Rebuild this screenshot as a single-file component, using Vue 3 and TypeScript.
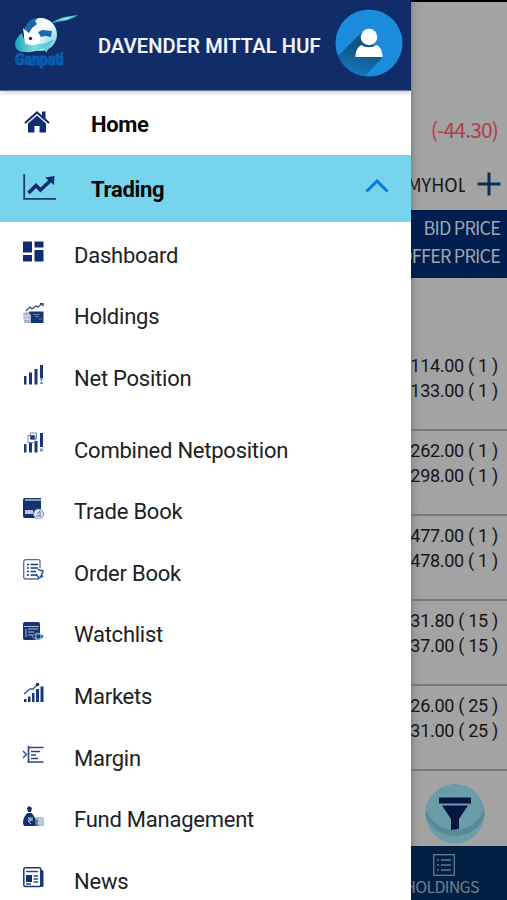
<script setup lang="ts">
interface Entry {
  label: string
  icon: string
  tall?: boolean
}
interface Quote {
  bid: string
  offer: string
}

const entries: Entry[] = [
  { label: 'Dashboard', icon: 'dashboard' },
  { label: 'Holdings', icon: 'holdings' },
  { label: 'Net Position', icon: 'net' },
  { label: 'Combined Netposition', icon: 'combined', tall: true },
  { label: 'Trade Book', icon: 'trade' },
  { label: 'Order Book', icon: 'order' },
  { label: 'Watchlist', icon: 'watch' },
  { label: 'Markets', icon: 'markets' },
  { label: 'Margin', icon: 'margin' },
  { label: 'Fund Management', icon: 'fund' },
  { label: 'News', icon: 'news' },
]

const quotes: Quote[] = [
  { bid: '114.00 ( 1 )', offer: '133.00 ( 1 )' },
  { bid: '262.00 ( 1 )', offer: '298.00 ( 1 )' },
  { bid: '477.00 ( 1 )', offer: '478.00 ( 1 )' },
  { bid: '31.80 ( 15 )', offer: '37.00 ( 15 )' },
  { bid: '26.00 ( 25 )', offer: '31.00 ( 25 )' },
]
</script>

<template>
  <div class="screen">
    <nav class="drawer">
      <header class="profile">
        <div class="brand">
          <svg class="globe" viewBox="0 0 64 40" width="64" height="40">
            <defs>
              <linearGradient id="swoosh" x1="0" y1="1" x2="1" y2="0">
                <stop offset="0" stop-color="#168da9" />
                <stop offset=".55" stop-color="#8ce5e8" />
                <stop offset="1" stop-color="#23a7c5" />
              </linearGradient>
              <linearGradient id="orbit" x1="0" y1="0" x2="1" y2="0">
                <stop offset="0" stop-color="#1ba3b8" />
                <stop offset=".5" stop-color="#7fdfe6" />
                <stop offset="1" stop-color="#2fb9d0" />
              </linearGradient>
              <linearGradient id="sea" x1="0" y1="0" x2="1" y2="1">
                <stop offset=".5" stop-color="#f4fbff" />
                <stop offset="1" stop-color="#4dc5d8" />
              </linearGradient>
            </defs>
            <circle cx="26.500" cy="19.500" r="16.500" fill="url(#sea)" />
            <path d="M11 15C12 7 17 3 24 3l-3 3 2 3-5 4-3 5z" fill="#1765ac" />
            <path d="M24 17l4-2 10 1-1 6-6-1-4 1z" fill="#196ba9" />
            <path d="M37 8C45 3 53 1 64 0c-7 5-16 6-25 8z" fill="url(#swoosh)" />
            <path d="M8 18C-1 25-2 36 10 37c12 1 24-4 30-13-7 5-15 6-22 5-6-1-9-5-10-11z" fill="url(#orbit)" />
            <path d="M9 13l6 6 3-1c6 1 9 5 8 9-4 4-10 4-15 1z" fill="#fff" />
            <circle cx="16.500" cy="23.500" r="1.800" fill="#12336d" />
            <path d="M30 32l7-3-5 9z" fill="#64d4df" />
          </svg>
          <span class="brand-name">Ganpati</span>
        </div>
        <span class="user">DAVENDER MITTAL HUF</span>
        <svg class="avatar" viewBox="0 0 68 68" width="68" height="68">
          <defs>
            <linearGradient id="shade" x1=".5" y1=".3" x2=".3" y2="1">
              <stop offset="0" stop-color="#115485" />
              <stop offset="1" stop-color="#178ade" />
            </linearGradient>
            <clipPath id="disc"><circle cx="34" cy="34" r="33.500" /></clipPath>
          </defs>
          <circle cx="34" cy="34" r="33.500" fill="#1c8cdd" />
          <path clip-path="url(#disc)" d="M28 22L-4 54l24 24 27-29z" fill="url(#shade)" />
          <circle cx="34" cy="28" r="8.300" fill="#fff" />
          <path d="M20.500 48c0-6 2-10 6-12 4 3 11 3 15 0 4 2 6 6 6 12z" fill="#fff" />
        </svg>
      </header>

      <div class="main-item">
        <svg class="home-icon" viewBox="0 0 26 22" width="26" height="22">
          <path d="M1 12L13 1.500 25 12" fill="none" stroke="#102d70" stroke-width="2.200" />
          <path d="M18 .5h3.500V9L18 6z M13 4.500L22 12.500V21.500h-6.500V15h-5v6.500H4v-9z" fill="#102d70" />
        </svg>
        <span>Home</span>
      </div>
      <div class="main-item active">
        <svg class="trend-icon" viewBox="0 0 34 26" width="34" height="26">
          <path d="M1.200 0v24.800H33" fill="none" stroke="#173a7a" stroke-width="1.800" />
          <path d="M5.500 19L13 11.500l4.500 4.500L28 6" fill="none" stroke="#102d70" stroke-width="3.600" />
          <path d="M22 3.500L31.500 2 31 11z" fill="#102d70" />
        </svg>
        <span>Trading</span>
        <svg class="chevron" viewBox="0 0 24 14" width="24" height="14">
          <path d="M1.500 12.500L12 2l10.500 10.500" fill="none" stroke="#087cda" stroke-width="3" />
        </svg>
      </div>

      <div class="sub-list">
        <div v-for="entry in entries" :key="entry.icon" class="sub-item" :class="{ tall: entry.tall }">
          <svg class="icon" viewBox="0 0 21 21" width="21" height="21">
            <path v-if="entry.icon === 'dashboard'" d="M0 .5h9v11H0z M11.500.5H20.500v6h-9z M0 14h9v6.500H0z M11.500 9h9v11.500h-9z" fill="#102d70" />
            <g v-else-if="entry.icon === 'holdings'">
              <path d="M3 8l4-4 2 2 4-3 2 1 5-4M17 .5h3v3" fill="none" stroke="#264481" stroke-width="1.200" />
              <path d="M6 8.500h14.500V20H6z" fill="#163574" />
              <path d="M10 11.500h7M12 13.500h4M16 16h3" stroke="#8195bb" stroke-width=".8" />
              <path d="M0 10l5-1 3 3v8H1z" fill="#a9b7ce" />
              <path d="M0 13h7M0 16h7" stroke="#e8edf4" />
            </g>
            <g v-else-if="entry.icon === 'net'" fill="#183879">
              <path d="M1 12h2.500v8.500H1z M6 8.500h3v12H6z M11.500 5h3v15.500h-3z M17 1h3v13.500h-3z M17 15.500h3l-1.500 1.500z" />
              <circle cx="18.500" cy="19" r="1.300" fill="#6b80ac" />
            </g>
            <g v-else-if="entry.icon === 'combined'" fill="#183879">
              <path d="M1 12h2.500v8.500H1z M6 11h3v9.500H6z M11.500 9h3v11.500h-3z M17 1h3v14h-3z" />
              <path d="M5 3.500h7v7H5z M7.500 1h6v6h-6z" fill="#fff" stroke="#7185af" />
              <path d="M7.500 3.500h4v4h-4z" />
              <circle cx="18.500" cy="18" r="1.800" fill="#8294b8" />
            </g>
            <g v-else-if="entry.icon === 'trade'">
              <path d="M0 2Q0 0 2 0h16v1.500H2v1h16V20H2q-2 0-2-2z" fill="#13306f" />
              <path d="M2 12h8v4H2z" fill="#bac5da" />
              <circle cx="15.500" cy="16" r="5" fill="#e5ebf4" stroke="#7189b5" />
              <path d="M13 18h5M14 16l3-3v5" fill="none" stroke="#536f9f" />
            </g>
            <g v-else-if="entry.icon === 'order'" fill="none" stroke="#5571a2">
              <path d="M17 9V2.500Q17 .7 15.500.7H3Q.7.7.7 3v15q0 2 2.300 2h13" stroke-width="1.300" />
              <path d="M4 5.500h2M4 9h2M4 12.500h2M4 16h2M7.500 5.500H15M7.500 9H15M7.500 12.500H13M7.500 16H14" stroke="#1b3a7a" stroke-width="1.600" />
              <path d="M15 10.500l5 1.500-1 3-2 4M13 15l3 4 4-2" stroke="#2c5795" stroke-width="1.600" />
            </g>
            <g v-else-if="entry.icon === 'watch'">
              <path d="M0 3q0-2 2-2h13q2 0 2 2v16H2q-2 0-2-2z" fill="#153371" />
              <path d="M1 5.500h15M3 8v8M5 8h10M5 11h6M5 14h5" stroke="#aebbd2" />
              <path d="M9 15.500q5-7 12 0-6 7-12 0z" fill="#173a74" stroke="#fff" stroke-width=".5" />
              <circle cx="15.300" cy="15.500" r="2.700" fill="none" stroke="#8dc4d4" stroke-width="1.100" />
            </g>
            <g v-else-if="entry.icon === 'markets'" fill="#173879">
              <path d="M1 17h2.500v3H1z M5 14.500h2.500V20H5z M9 11h2.500v9H9z M13 7h3v13h-3z M17.500 4.500h3V20h-3z" />
              <path d="M1 12l6-5 3 0 5-5" fill="none" stroke="#345187" stroke-width="1.300" />
              <circle cx="14.500" cy="2.500" r="1.800" />
            </g>
            <g v-else-if="entry.icon === 'margin'" fill="none" stroke="#2b4981">
              <path d="M5.500 2v17M6 3.500h14.500M8 7.500h9M8 11h5M8 14.500h7M6 18h14.500" stroke-width="1.700" />
              <path d="M0 7l3.500 3.500L0 14" stroke-width="1.400" />
            </g>
            <g v-else-if="entry.icon === 'fund'">
              <path d="M4 2l2-2 3 2-1 4H5z M4.500 7h4c4 4 5 8 4 13H1C-1 17 0 11 4.500 7z" fill="#142f70" />
              <path d="M5 12h5M5 14h5M6 12q5 3-1 3l3 3" fill="none" stroke="#c6d0e1" />
              <path d="M12 11h7q2 0 2 2v7h-9z" fill="#b4bfd3" />
              <path d="M12 13h3v7h-3z" fill="#536b9b" />
              <path d="M13 14h7M13 17h7" stroke="#e0e5ee" stroke-width=".6" />
            </g>
            <g v-else>
              <path d="M17 3h2q1.500 0 1.500 2v13.500q0 1.500-2 1.500H16z" fill="#19356f" />
              <rect x=".8" y=".8" width="17" height="18.800" rx="1.500" fill="#fff" stroke="#183775" stroke-width="1.500" />
              <path d="M3 8h6v7H3z" fill="#102d70" />
              <path d="M3 4.500h12M10.500 9H15M10.500 12H15M10.500 15H15M3 17h5" stroke="#29477f" stroke-width="1.300" />
            </g>
          </svg>
          <span class="sub-label">{{ entry.label }}</span>
        </div>
      </div>
    </nav>

    <main class="page">
      <div class="status"></div>
      <div class="change">(-44.30)</div>
      <div class="tabs">
        <div class="tab"><span>MYHOL</span></div>
        <svg viewBox="0 0 24 24" width="24" height="24"><path d="M12 .5v23M.500 12h23" stroke="#063157" stroke-width="3" /></svg>
      </div>
      <div class="columns"><span>BID PRICE</span><span>OFFER PRICE</span></div>
      <div class="quotes">
        <div v-for="quote in quotes" :key="quote.bid" class="quote">
          <span>{{ quote.bid }}</span><span>{{ quote.offer }}</span>
        </div>
      </div>
      <div class="filter">
        <svg viewBox="0 0 60 60" width="60" height="60">
          <defs><clipPath id="round"><circle cx="30" cy="30" r="29.500" /></clipPath></defs>
          <circle cx="30" cy="30" r="29.500" fill="#6b9ca9" />
          <g clip-path="url(#round)">
            <circle cx="30" cy="20" r="32" fill="#5b8894" />
            <circle cx="30" cy="15" r="31" fill="#6b9ca9" />
          </g>
          <path d="M14 13.500h32v6H14z M17 21.500h26L34 35v10L26 46V35z" fill="#071641" />
        </svg>
      </div>
      <footer class="bottom">
        <svg viewBox="0 0 22 22" width="22" height="22" fill="none" stroke="#65798d">
          <rect x=".7" y=".7" width="20.600" height="20.600" stroke-width="1.300" />
          <path d="M4 6h2M4 11h2M4 16h2M8 6h10M8 11h10M8 16h10" stroke-width="1.300" />
        </svg>
        <span>HOLDINGS</span>
      </footer>
    </main>
  </div>
</template>

<style>
body {
  margin: 0;
  overflow: hidden;
}
</style>

<style scoped>
.screen {
  display: grid;
  grid-template-columns: 411px 96px;
  width: 507px;
  height: 900px;
  overflow: hidden;
  font-family: Roboto, sans-serif;
}
.drawer {
  background: #fff;
  height: 900px;
  overflow: hidden;
}
.profile {
  box-sizing: border-box;
  height: 91px;
  display: flex;
  align-items: flex-start;
  background: #102c69;
  border-bottom: 1px solid #66719e;
  box-shadow: 0 1px 5px #8888;
}
.brand {
  width: 64px;
  margin: 15px 0 0 14px;
}
.globe {
  display: block;
}
.brand-name {
  display: block;
  margin: -3px 0 0 1px;
  width: 49px;
  color: #075cae;
  font: 900 14.5px/16px Roboto, sans-serif;
  letter-spacing: -0.3px;
  -webkit-text-stroke: 0.7px #075cae;
  transform: scaleY(1.15);
}
.user {
  width: 238px;
  margin: 34px 0 0 20px;
  color: #f4f7ff;
  font-size: 20px;
  line-height: 24px;
  font-weight: 500;
  letter-spacing: 0.17px;
  white-space: nowrap;
  -webkit-text-stroke: 0.2px #f4f7ff;
}
.avatar {
  margin-top: 9px;
  margin-left: -1px;
}
.main-item {
  height: 64px;
  display: grid;
  grid-template-columns: 91px 1fr 70px;
  align-items: center;
  font-size: 22px;
  line-height: 26px;
  font-weight: 700;
  letter-spacing: -0.3px;
  color: #050708;
}
.main-item span {
  padding-top: 3px;
}
.home-icon {
  margin: 0 0 2px 24px;
}
.active {
  height: 67px;
  background: #76d4ed;
}
.active span {
  padding-top: 2px;
}
.trend-icon {
  margin: 0 0 4px 23px;
}
.chevron {
  margin: 0 0 6px 24px;
}
.sub-list {
  padding-top: 3px;
}
.sub-item {
  height: 61.6px;
  display: grid;
  grid-template-columns: 21px 1fr;
  column-gap: 30px;
  align-items: center;
  padding-left: 23px;
  color: #202124;
}
.sub-label {
  font-size: 22px;
  line-height: 26px;
  letter-spacing: -0.24px;
  white-space: nowrap;
}
.icon {
  margin-bottom: 8px;
}
.tall {
  padding-top: 10px;
}
.tall .icon {
  margin-bottom: 17px;
}
.page {
  display: flex;
  flex-direction: column;
  overflow: hidden;
  height: 900px;
  background: linear-gradient(90deg, #858585, #989898 3px, #a2a2a2 9px, #a3a3a3 13px);
  color: #151515;
}
.status {
  height: 2px;
  background: #000;
}
.change {
  height: 36px;
  margin: 109px 9px 1px 0;
  color: #b23d4a;
  text-align: right;
  font: 21px/36px "Noto Sans CJK SC", sans-serif;
  letter-spacing: -0.85px;
}
.tabs {
  height: 62px;
  display: flex;
  align-items: center;
  justify-content: space-between;
  padding-right: 6px;
  padding-top: 10px;
  box-sizing: border-box;
}
.tab {
  width: 54px;
  overflow: hidden;
  font: 18px/26px "Noto Sans CJK SC", sans-serif;
}
.tab span {
  display: block;
  margin-left: -4px;
}
.columns {
  box-sizing: border-box;
  height: 68px;
  display: flex;
  flex-direction: column;
  align-items: flex-end;
  padding: 3px 7px 0 0;
  background: #001d4f;
  color: #a0a6ad;
  font: 18px/28px "Noto Sans CJK SC", sans-serif;
  letter-spacing: -0.8px;
  white-space: nowrap;
}
.quotes {
  padding-top: 68px;
}
.quote {
  box-sizing: border-box;
  height: 85px;
  display: flex;
  flex-direction: column;
  align-items: flex-end;
  padding: 7px 9px 0 0;
  border-bottom: 2px solid #777;
  font-size: 18px;
  line-height: 25px;
  letter-spacing: -0.3px;
  white-space: nowrap;
}
.filter {
  height: 75px;
  box-sizing: border-box;
  padding: 13px 0 0 14px;
}
.bottom {
  flex: 1;
  display: flex;
  flex-direction: column;
  align-items: center;
  padding: 8px 31px 0 0;
  background: #001f42;
  color: #73808e;
  font: 16px/22px "Noto Sans CJK SC", sans-serif;
}
.bottom span {
  margin: -1px 4px 0 0;
  letter-spacing: -0.7px;
}
</style>
